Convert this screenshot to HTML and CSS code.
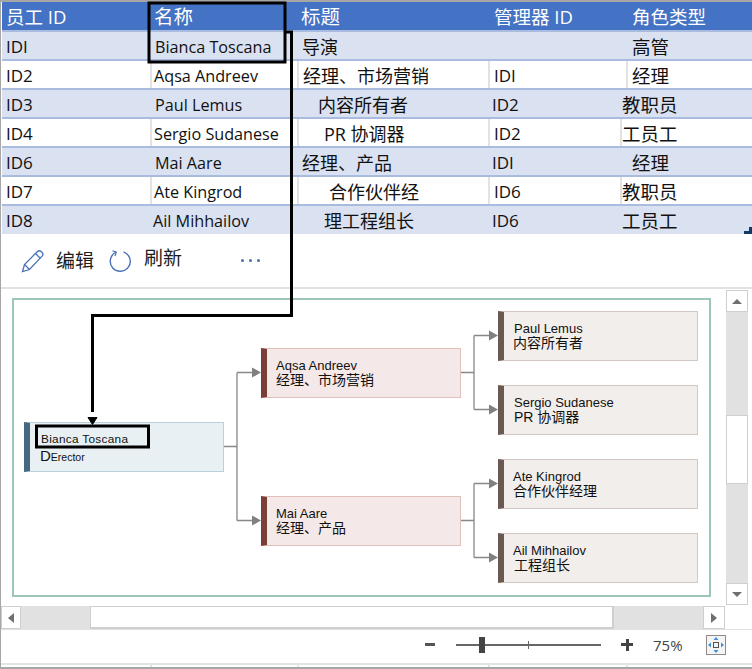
FILE: index.html
```html
<!DOCTYPE html>
<html lang="zh">
<head>
<meta charset="utf-8">
<title>组织结构图</title>
<link rel="stylesheet" href="styles.css">
</head>
<body>
<div class="app">
  <div class="sheet">
    <div class="row head">
      <div class="cell c1"><span class="h1">员工 ID</span></div>
      <div class="cell c2"><span class="h2">名称</span></div>
      <div class="cell c3"><span class="h2">标题</span></div>
      <div class="cell c4"><span class="h1">管理器 ID</span></div>
      <div class="cell c5"><span class="h1">角色类型</span></div>
    </div>
    <div class="row odd">
      <div class="cell c1">IDI</div>
      <div class="cell c2 n1">Bianca Toscana</div>
      <div class="cell c3 t0">导演</div>
      <div class="cell c4"></div>
      <div class="cell c5">高管</div>
    </div>
    <div class="row even">
      <div class="cell c1">ID2</div>
      <div class="cell c2">Aqsa Andreev</div>
      <div class="cell c3">经理、市场营销</div>
      <div class="cell c4">IDI</div>
      <div class="cell c5">经理</div>
    </div>
    <div class="row odd">
      <div class="cell c1">ID3</div>
      <div class="cell c2 n1">Paul Lemus</div>
      <div class="cell c3 t1">内容所有者</div>
      <div class="cell c4">ID2</div>
      <div class="cell c5 r1">教职员</div>
    </div>
    <div class="row even">
      <div class="cell c1">ID4</div>
      <div class="cell c2">Sergio Sudanese</div>
      <div class="cell c3 t2">PR 协调器</div>
      <div class="cell c4">ID2</div>
      <div class="cell c5 r1">工员工</div>
    </div>
    <div class="row odd">
      <div class="cell c1">ID6</div>
      <div class="cell c2 n1">Mai Aare</div>
      <div class="cell c3 t0">经理、产品</div>
      <div class="cell c4">IDI</div>
      <div class="cell c5">经理</div>
    </div>
    <div class="row even">
      <div class="cell c1">ID7</div>
      <div class="cell c2">Ate Kingrod</div>
      <div class="cell c3 t3">合作伙伴经</div>
      <div class="cell c4">ID6</div>
      <div class="cell c5 r1">教职员</div>
    </div>
    <div class="row odd last">
      <div class="cell c1">ID8</div>
      <div class="cell c2 n2">Ail Mihhailov</div>
      <div class="cell c3 t4">理工程组长</div>
      <div class="cell c4">ID6</div>
      <div class="cell c5 r1">工员工</div>
      <span class="grip"></span>
    </div>
  </div>

  <div class="toolbar">
    <svg class="ico pencil" width="23" height="24" viewBox="0 0 23 24" fill="none" stroke="#4a72b8" stroke-width="1.3"><path d="M1.5 22.5l2-7L16.5 2.5c1-1 2.6-1 3.6 0l1 1c1 1 1 2.6 0 3.6L8.500 20.500z"/><path d="M3.500 15.500l5 5M14.500 4.500l5 5"/></svg>
    <span class="tool edit">编辑</span>
    <svg class="ico refresh" width="22" height="24" viewBox="0 0 22 24" fill="none" stroke="#4a72b8" stroke-width="1.400"><path d="M7 3.200A10 10 0 1 0 14.500 2.800"/><path d="M3.500 1.800l3.800 1.300-1.300 3.900" stroke-width="1.200"/></svg>
    <span class="tool fresh">刷新</span>
    <span class="dots"><i></i><i></i><i></i></span>
  </div>

  <div class="viewer">
    <div class="canvas">
      <div class="frame"></div>
      <svg class="links" width="724" height="315" viewBox="0 0 724 315" fill="none" stroke="#888" stroke-width="1.300">
        <path d="M223 157.500H236M236 83.500V231.500M236 83.500H254M236 231.500H254"/>
        <path d="M460 83.500H473M473 46.500V120.500M473 46.500H491M473 120.500H491"/>
        <path d="M460 231.500H473M473 194.500V268.500M473 194.500H491M473 268.500H491"/>
        <g fill="#808080" stroke="none">
          <path d="M251 78.500l9 5-9 5zM251 226.500l9 5-9 5zM488 41.500l9 5-9 5zM488 115.500l9 5-9 5zM488 189.500l9 5-9 5zM488 263.500l9 5-9 5z"/>
        </g>
      </svg>
      <div class="node root"><span class="nm rn">Bianca Toscana</span><span class="rl"><b class="big">D</b>Erector</span></div>
      <div class="node red aq"><span class="nm">Aqsa Andreev</span><span class="rl">经理、市场营销</span></div>
      <div class="node red ma"><span class="nm">Mai Aare</span><span class="rl">经理、产品</span></div>
      <div class="node tan pa"><span class="nm in1">Paul Lemus</span><span class="rl">内容所有者</span></div>
      <div class="node tan se"><span class="nm in3">Sergio Sudanese</span><span class="rl in3">PR 协调器</span></div>
      <div class="node tan at"><span class="nm">Ate Kingrod</span><span class="rl">合作伙伴经理</span></div>
      <div class="node tan ai"><span class="nm">Ail Mihhailov</span><span class="rl in2">工程组长</span></div>
    </div>
    <div class="vbar">
      <div class="sbtn"><span class="tri up"></span></div>
      <div class="vtrack"><div class="vthumb"></div></div>
      <div class="sbtn"><span class="tri down"></span></div>
    </div>
  </div>

  <div class="hbar">
    <div class="hbtn"><span class="tri left"></span></div>
    <div class="htrack"><div class="hthumb"></div></div>
    <div class="hbtn wide"><span class="tri right"></span></div>
  </div>

  <div class="status">
    <span class="minus"></span>
    <div class="slider"><span class="tick"></span><span class="knob"></span></div>
    <span class="plus"></span>
    <span class="pct">75%</span>
    <svg class="fit" width="20" height="20" viewBox="0 0 20 20"><rect x=".5" y=".5" width="19" height="19" fill="#f4f4f4" stroke="#8a8a8a"/><rect x="7.500" y="7.500" width="5" height="5" fill="none" stroke="#555"/><path d="M10 2l2.500 3h-5zM10 18l2.500-3h-5zM2 10l3-2.500v5zM18 10l-3-2.500v5z" fill="#3f8fd6"/></svg>
  </div>

  <div class="tail"><span class="t c1"></span><span class="t c2"></span><span class="t c3"></span><span class="t c4"></span><span class="t c5"></span></div>

  <svg class="callout" width="752" height="669" viewBox="0 0 752 669" fill="none" stroke="#000">
    <rect x="149" y="3" width="136" height="59" stroke-width="3"/>
    <path d="M285 32H291.500V315.500H92.500V412" stroke-width="3"/>
    <path d="M88 417.500l4.500 7 4.500-7z" fill="#000" stroke-width="1"/>
    <rect x="36.500" y="426" width="112" height="21" stroke-width="3"/>
  </svg>
</div>
</body>
</html>
```
FILE: styles.css
```css
* { box-sizing: border-box; }
html, body { margin: 0; padding: 0; background: #fff; }
body { width: 752px; height: 669px; overflow: hidden; font-family: "Open Sans", "Noto Sans CJK SC", sans-serif; color: #111; }
.app { position: relative; width: 752px; height: 669px; display: flex; flex-direction: column; border-top: 2px solid #a6a6a6; border-left: 1px solid #a6a6a6; border-bottom: 2px solid #a6a6a6; }

.sheet { display: flex; flex-direction: column; padding-left: 1px; }
.row { position: relative; display: grid; grid-template-columns: 148px 147px 191px 138px 122px; height: 29px; padding-right: 3px; border-bottom: 2px solid #a9bce0; font-size: 17px; line-height: 28px; }
.row.head { height: 30px; background: #4472c4; color: #fff; line-height: 28px; }
.row.odd { background: #dae1f1; }
.row.even { background: #fff; }
.row.even .cell + .cell { border-left: 2px solid #e2e2e2; }
.row.last { border-bottom: 0; height: 28px; }
.cell { padding-left: 4px; padding-top: 1px; white-space: nowrap; overflow: hidden; }
.head .cell { padding-top: 1px; }
.head .c4, .head .c5 { padding-left: 6px; }
.h1 { font-size: 18.500px; }
.h2 { font-size: 19.500px; }
.c2 { font-size: 16.200px; }
.c3, .c5 { font-size: 18.500px; }
.c3 { font-size: 18px; }
.c4 { font-size: 17px; }
.even .c2 { padding-left: 2px; }
.n1 { padding-left: 5px; }
.n2 { padding-left: 3px; }
.t0 { padding-left: 5px; }
.t1 { padding-left: 21px; }
.t2 { padding-left: 25px; }
.t3 { padding-left: 30px; }
.t4 { padding-left: 27px; }
.odd .c5 { padding-left: 6px; }
.cell.r1 { padding-left: 0; margin-left: -6px; }
.odd .cell.r1 { margin-left: -4px; }
.grip { position: absolute; right: 0; bottom: 0; width: 8px; height: 7px; background: linear-gradient(#123a66, #123a66) right bottom / 8px 3px no-repeat, linear-gradient(#123a66, #123a66) right bottom / 3px 7px no-repeat; }

.toolbar { display: flex; align-items: center; height: 55px; border-bottom: 2px solid #e2e2e2; font-size: 19px; color: #1c1c1c; padding-left: 20px; }
.ico { flex: none; }
.tool { line-height: 26px; }
.edit { margin-left: 12px; }
.refresh { margin-left: 15px; }
.fresh { margin-left: 13px; position: relative; top: -3px; }
.dots { display: flex; gap: 5px; margin-left: 59px; }
.dots i { width: 3px; height: 3px; border-radius: 50%; background: #4a6fa8; }

.viewer { display: flex; height: 316px; }
.canvas { position: relative; width: 725px; }
.frame { position: absolute; left: 11px; top: 9px; width: 699px; height: 299px; border: 2px solid #9cc6bb; }
.links { position: absolute; left: 0; top: 0; }
.node { position: absolute; width: 200px; height: 50px; display: flex; flex-direction: column; justify-content: center; border: 1px solid; border-left-width: 6px; line-height: 15px; font-family: "Liberation Sans", "Noto Sans CJK SC", sans-serif; color: #111; padding-left: 9px; }
.nm { font-size: 13px; }
.rl { font-size: 14px; }
.root { left: 23px; top: 133px; background: #e8f0f3; border-color: #b8d0dc; border-left-color: #45697f; padding-left: 10px; }
.rn { font-size: 11.800px; letter-spacing: .3px; padding-top: 3px; padding-left: 1px; }
.root .rl { font-size: 10.500px; padding-top: 1px; }
.big { font-weight: 400; font-size: 15px; }
.red { background: #f4e9e8; border-color: #e3bfb9; border-left-color: #7a4038; }
.tan { background: #f1eeec; border-color: #d2c8c3; border-left-color: #6a5950; }
.aq { left: 260px; top: 59px; }
.ma { left: 260px; top: 207px; }
.pa { left: 497px; top: 22px; }
.se { left: 497px; top: 96px; }
.at { left: 497px; top: 170px; }
.ai { left: 497px; top: 244px; }
.in1 { padding-left: 1px; }
.in2 { padding-left: 1px; }
.in3 { padding-left: 1px; }

.vbar { width: 22px; margin-top: 1px; display: flex; flex-direction: column; background: #e1e1e1; }
.sbtn { height: 22px; background: #fff; border: 1px solid #cfcfcf; display: flex; align-items: center; justify-content: center; flex: none; }
.vtrack { flex: 1; padding-top: 103px; }
.vthumb { height: 69px; background: #fff; border: 1px solid #cfcfcf; }
.tri { width: 0; height: 0; border-style: solid; border-color: transparent; }
.up { border-width: 0 5px 5px; border-bottom-color: #6f6f6f; }
.down { border-width: 5px 5px 0; border-top-color: #6f6f6f; }
.left { border-width: 5px 6px 5px 0; border-right-color: #6f6f6f; }
.right { border-width: 5px 0 5px 6px; border-left-color: #6f6f6f; }

.hbar { display: flex; height: 23px; width: 724px; margin-top: 1px; }
.hbtn { width: 20px; flex: none; background: #fff; border: 1px solid #cfcfcf; display: flex; align-items: center; justify-content: center; }
.hbtn.wide { width: 22px; }
.htrack { flex: 1; background: #e1e1e1; padding-left: 69px; padding-right: 89px; }
.hthumb { height: 100%; background: #fff; border: 2px solid #cfcfcf; border-width: 1px 2px 2px 1px; }

.status { display: flex; align-items: center; height: 34px; border-top: 1px solid #e2e2e2; padding-left: 424px; padding-bottom: 4px; }
.minus { width: 10px; height: 3px; background: #555; }
.slider { position: relative; width: 145px; height: 2px; background: #666; margin-left: 21px; }
.tick { position: absolute; left: 72px; top: -3px; width: 1px; height: 8px; background: #666; }
.knob { position: absolute; left: 23px; top: -7px; width: 6px; height: 16px; background: #444; }
.plus { width: 12px; height: 12px; margin-left: 20px; background: linear-gradient(#444, #444) center / 12px 3px no-repeat, linear-gradient(#444, #444) center / 3px 12px no-repeat; }
.pct { margin-left: 20px; font-size: 15px; color: #444; width: 34px; }
.fit { margin-left: 19px; flex: none; }

.tail { flex: 1; display: grid; grid-template-columns: 148px 147px 191px 138px 122px; padding-left: 1px; border-top: 2px solid #e4e4e4; }
.t + .t { border-left: 2px solid #e4e4e4; }

.callout { position: absolute; left: -1px; top: -2px; pointer-events: none; }
```
